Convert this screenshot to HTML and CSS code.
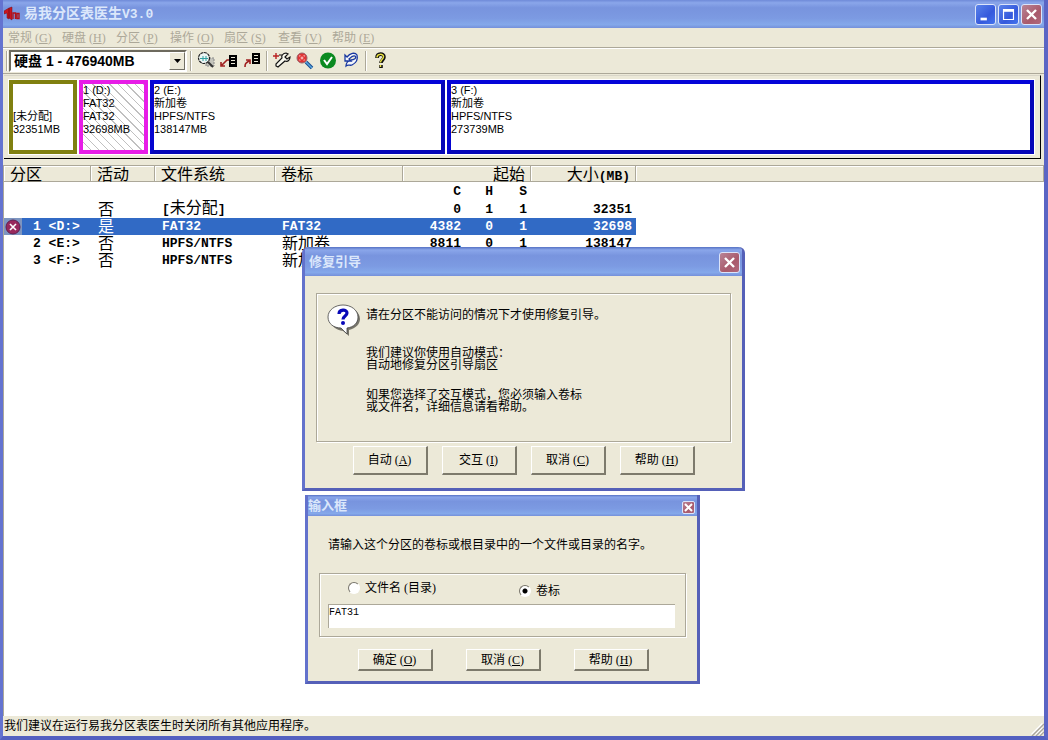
FILE: index.html
```html
<!DOCTYPE html>
<html lang="zh-CN">
<head>
<meta charset="utf-8">
<title>易我分区表医生V3.0</title>
<link rel="stylesheet" href="styles.css">
</head>
<body>
<div class="window">
  <header class="titlebar">
    <svg class="app-icon" width="16" height="16" viewBox="0 0 16 16"><path d="M0 5 5 2v11L3 12V7L0 8zM5 2l3-1v13l-3-2z" fill="#c81420" stroke="#780c14" stroke-width=".5"/><path d="M9 13V7h2.500v6M13 7.500h2v5h-2z" fill="none" stroke="#b01018" stroke-width="1.400"/></svg>
    <h1 class="title">易我分区表医生<span class="title-latin">V3.0</span></h1>
    <button class="caption-btn" aria-label="最小化"><svg width="21" height="21" viewBox="0 0 21 21"><path d="M5 14h7v3H5z" fill="#fff"/></svg></button>
    <button class="caption-btn" aria-label="最大化"><svg width="21" height="21" viewBox="0 0 21 21"><path d="M5 5h11v11H5z" fill="none" stroke="#fff" stroke-width="1.300"/><path d="M4.500 4.500h12v3h-12z" fill="#fff"/></svg></button>
    <button class="caption-btn close" aria-label="关闭"><svg width="21" height="21" viewBox="0 0 21 21"><path d="m5.500 5.500 10 10m0-10-10 10" stroke="#fff" stroke-width="2.600"/></svg></button>
  </header>

  <nav class="menubar">
    <button class="menu">常规 (<u>G</u>)</button>
    <button class="menu">硬盘 (<u>H</u>)</button>
    <button class="menu">分区 (<u>P</u>)</button>
    <button class="menu">操作 (<u>O</u>)</button>
    <button class="menu">扇区 (<u>S</u>)</button>
    <button class="menu">查看 (<u>V</u>)</button>
    <button class="menu">帮助 (<u>E</u>)</button>
  </nav>

  <div class="toolbar">
    <span class="grip"></span>
    <div class="combo">
      <select class="combo-select" aria-label="硬盘"><option>硬盘 1 - 476940MB</option></select>
      <span class="combo-arrow"><svg width="7" height="4" viewBox="0 0 7 4"><path d="M0 0h7L3.500 4z"/></svg></span>
    </div>
    <span class="sep"></span>
    <button class="tool" aria-label="浏览"><svg width="20" height="20" viewBox="0 0 20 20"><path d="M10 7h8v8h-8z" fill="#c4c4bc" stroke="#888" stroke-dasharray="2 1"/><circle cx="8" cy="7" r="5.500" fill="#eef6f4" stroke="#222" stroke-width="1.200" stroke-dasharray="3 .6"/><path d="M4 7.500h8M7 5v5M10 5v5" stroke="#30a0a0"/><path d="m12 11 5 5" stroke="#333" stroke-width="2"/></svg></button>
    <button class="tool" aria-label="备份分区表"><svg width="20" height="20" viewBox="0 0 20 20"><path d="M10 4h8v12h-8z"/><path d="M12 6.500h4M12 9.500h4M12 12.500h4" stroke="#ece9d8"/><path d="M10 9H8l-5 5M2 11v4h4" fill="none" stroke="#a02020" stroke-width="1.600"/></svg></button>
    <button class="tool" aria-label="恢复分区表"><svg width="20" height="20" viewBox="0 0 20 20"><path d="M10 2h8v11h-8z"/><path d="M12 4.500h4M12 7.500h4M12 10.500h4" stroke="#ece9d8"/><path d="M3 16c0-4 1-4 4-6M4 9h4v4" fill="none" stroke="#a02020" stroke-width="1.600"/></svg></button>
    <span class="sep"></span>
    <button class="tool" aria-label="重建分区表"><svg width="20" height="20" viewBox="0 0 20 20"><path d="M4 2v6M1 5h6" stroke="#b82020" stroke-width="1.400"/><path d="M14 2c-3 0-5 3-4 5l-6 6 0 2 2 1 7-6c3 1 5-1 5-4l-3 2-2-2 3-3zM7 4h3" fill="#f8f8ee" stroke="#111" stroke-width="1.200"/></svg></button>
    <button class="tool" aria-label="浏览扇区"><svg width="20" height="20" viewBox="0 0 20 20"><circle cx="7" cy="7" r="5" fill="#e03434" stroke="#986068"/><path d="m4.500 4.500 5 5m0-5-5 5" stroke="#ffd8d8" stroke-width="1.200" stroke-dasharray="1 1"/><path d="m11 11 6 6" stroke="#164a90" stroke-width="3.500"/><path d="m11 11 6 6" stroke="#58a8e0" stroke-width="1.500"/></svg></button>
    <button class="tool" aria-label="应用"><svg width="20" height="20" viewBox="0 0 20 20"><circle cx="10" cy="9.500" r="8" fill="#0b8a20"/><path d="m6 9 3 4 5-7" fill="none" stroke="#fff" stroke-width="2"/></svg></button>
    <button class="tool" aria-label="撤销"><svg width="20" height="20" viewBox="0 0 20 20"><path d="M4 4v6h6L8 8c2-2 4-4 6-3 2 2-1 4-4 4-3 1-5 3-5 6 2-2 4 0 6-1 4-2 6-6 5-10-2-3-7-2-10 2z" fill="#f4f6fa" stroke="#1838a0" stroke-width="1.300"/></svg></button>
    <span class="sep"></span>
    <button class="tool" aria-label="帮助"><svg width="20" height="20" viewBox="0 0 20 20"><path d="M6 7c0-5 7-5 7-1 0 3-3 3-3 6M10 14v3" fill="none" stroke="#111" stroke-width="3.600"/><path d="M6 6.500c0-4 6.500-4 6.500-1 0 3-3 3-3 6M9.500 14v2" fill="none" stroke="#e8e040" stroke-width="1.500"/></svg></button>
  </div>

  <section class="diskmap">
    <div class="part free">[未分配]<br>32351MB</div>
    <div class="part fat">1 (D:)<br>FAT32<br>FAT32<br>32698MB</div>
    <div class="part ntfs">2 (E:)<br>新加卷<br>HPFS/NTFS<br>138147MB</div>
    <div class="part ntfs">3 (F:)<br>新加卷<br>HPFS/NTFS<br>273739MB</div>
  </section>

  <main class="list">
    <table class="grid">
      <colgroup><col class="c-icon"><col class="c-part"><col class="c-act"><col class="c-fs"><col class="c-label"><col class="c-c"><col class="c-h"><col class="c-s"><col class="c-size"><col></colgroup>
      <thead>
        <tr><th colspan="2">分区</th><th>活动</th><th>文件系统</th><th>卷标</th><th colspan="3" class="num">起始</th><th class="num">大小<span class="latin">(MB)</span></th><th></th></tr>
      </thead>
      <tbody>
        <tr><td></td><td></td><td></td><td></td><td></td><td class="num">C</td><td class="num">H</td><td class="num">S</td><td></td><td></td></tr>
        <tr><td></td><td></td><td class="zh">否</td><td>[<span class="zh">未分配</span>]</td><td></td><td class="num">0</td><td class="num">1</td><td class="num">1</td><td class="num">32351</td><td></td></tr>
        <tr class="selected"><td class="mark"><svg width="16" height="16" viewBox="0 0 16 16"><circle cx="8" cy="8" r="7" fill="#98285c" stroke="#602050"/><path d="m5 5 6 6m0-6-6 6" stroke="#fff" stroke-width="1.600"/></svg></td><td>1 &lt;D:&gt;</td><td class="zh">是</td><td>FAT32</td><td>FAT32</td><td class="num">4382</td><td class="num">0</td><td class="num">1</td><td class="num">32698</td><td class="rest"></td></tr>
        <tr><td></td><td>2 &lt;E:&gt;</td><td class="zh">否</td><td>HPFS/NTFS</td><td class="zh">新加卷</td><td class="num">8811</td><td class="num">0</td><td class="num">1</td><td class="num">138147</td><td></td></tr>
        <tr><td></td><td>3 &lt;F:&gt;</td><td class="zh">否</td><td>HPFS/NTFS</td><td class="zh">新加卷</td><td></td><td></td><td></td><td></td><td></td></tr>
      </tbody>
    </table>
  </main>

  <footer class="status"><span>我们建议在运行易我分区表医生时关闭所有其他应用程序。</span>
    <svg width="13" height="13" viewBox="0 0 13 13"><path d="M1 12 12 1M5 12l7-7M9 12l3-3" stroke="#fff" stroke-width="3"/><path d="M1 13 13 1M5 13l8-8M9 13l4-4" stroke="#aaa69a" stroke-width="1.500"/></svg>
  </footer>
</div>

<section class="dialog repair" role="dialog" aria-labelledby="repair-title">
  <header class="dialog-title"><h2 id="repair-title">修复引导</h2>
    <button class="caption-btn close" aria-label="关闭"><svg width="21" height="21" viewBox="0 0 21 21"><path d="m5.500 5.500 10 10m0-10-10 10" stroke="#fff" stroke-width="2.600"/></svg></button>
  </header>
  <div class="dialog-body">
    <div class="box message">
      <svg class="bubble" width="34" height="34" viewBox="0 0 34 34"><path d="M18 3c8 0 15 5 15 12 0 5-4 9-11 11v6l-6-5C9 26 4 22 4 16 4 8 10 3 18 3z" fill="#77756a"/><path d="M16 1c8 0 15 5 15 12 0 6-4 10-11 11v6l-6-6C7 24 1 20 1 13 1 6 8 1 16 1z" fill="#fff" stroke="#444" stroke-width=".8"/><path d="M12 10c0-5 8-5 8-1 0 3-4 3-4 6.500" fill="none" stroke="#0808b8" stroke-width="3.200"/><circle cx="16" cy="19" r="2" fill="#0808b8"/></svg>
      <div class="copy">
        <p class="lead">请在分区不能访问的情况下才使用修复引导。</p>
        <p>我们建议你使用自动模式：<br>自动地修复分区引导扇区</p>
        <p>如果您选择了交互模式，您必须输入卷标<br>或文件名，详细信息请看帮助。</p>
      </div>
    </div>
    <div class="actions">
      <button class="btn">自动 (<u>A</u>)</button>
      <button class="btn">交互 (<u>I</u>)</button>
      <button class="btn">取消 (<u>C</u>)</button>
      <button class="btn">帮助 (<u>H</u>)</button>
    </div>
  </div>
</section>

<section class="dialog prompt" role="dialog" aria-labelledby="prompt-title">
  <header class="dialog-title"><h2 id="prompt-title">输入框</h2>
    <button class="caption-btn close" aria-label="关闭"><svg width="11" height="11" viewBox="0 0 11 11"><path d="m2 2 7 7m0-7-7 7" stroke="#fff" stroke-width="2"/></svg></button>
  </header>
  <div class="dialog-body">
    <label class="question" for="answer">请输入这个分区的卷标或根目录中的一个文件或目录的名字。</label>
    <div class="box">
      <div class="choices">
        <label class="choice"><input class="radio" type="radio" name="kind">文件名 (目录)</label>
        <label class="choice"><input class="radio" type="radio" name="kind" checked>卷标</label>
      </div>
      <input class="field" id="answer" type="text" value="FAT31">
    </div>
    <div class="actions">
      <button class="btn">确定 (<u>O</u>)</button>
      <button class="btn">取消 (<u>C</u>)</button>
      <button class="btn">帮助 (<u>H</u>)</button>
    </div>
  </div>
</section>
</body>
</html>
```
FILE: styles.css
```css
* { box-sizing: border-box; }

body {
  margin: 0;
  font: 12px/14px "Liberation Serif", "Noto Sans CJK SC", serif;
  color: #000;
}

button, input, select { font: inherit; color: inherit; margin: 0; }
h1, h2, p { margin: 0; }

.window {
  display: flex;
  flex-direction: column;
  min-height: 100vh;
  border: solid #6473d0;
  border-width: 0 4px 4px 3px;
  border-right-color: #5b65c4;
  border-bottom-color: #5360c0;
  background: #ece9d8;
}

.titlebar {
  display: flex;
  align-items: center;
  gap: 2px;
  height: 28px;
  padding: 0 2px 0 1px;
  background: linear-gradient(#6f8ad8, #8aa6ea 10%, #7894de 28%, #7c9ae2 65%, #84a8ea 88%, #7590da);
}
.app-icon { margin-right: 2px; }
.title, .dialog-title h2 {
  flex: 1;
  color: #dbe7fb;
  font: bold 14px/18px "Liberation Mono", "Noto Sans CJK SC", sans-serif;
}
.title-latin { font-size: 13px; }

.caption-btn {
  display: flex;
  padding: 0;
  border: 1px solid #dbe4fa;
  border-radius: 3px;
  background: linear-gradient(135deg, #5a83ea, #3559dc 60%, #4474ee);
}
.caption-btn.close { background: linear-gradient(135deg, #b98496, #a95a6c 60%, #b0687c); }
.titlebar .caption-btn svg, .repair .caption-btn svg { width: 19px; height: 19px; }

.menubar {
  display: grid;
  grid-template-columns: repeat(7, 54px);
  height: 20px;
  padding: 0 5px;
  border-bottom: 1px solid #aca899;
}
.menu {
  padding: 0;
  border: 0;
  background: none;
  color: #aca899;
  text-align: left;
  white-space: nowrap;
}

.toolbar {
  display: flex;
  align-items: center;
  height: 26px;
  padding-left: 3px;
  border-top: 1px solid #fff;
  border-bottom: 1px solid #aca899;
}
.grip, .sep {
  width: 2px;
  height: 20px;
  border-left: 1px solid #aca899;
  border-right: 1px solid #fff;
}
.grip { margin-right: 1px; }
.sep { margin: 0 3px; }
.combo { position: relative; width: 178px; }
.combo-select {
  display: block;
  width: 100%;
  height: 22px;
  padding: 0 20px 0 3px;
  appearance: none;
  border: 2px solid #fff;
  border-top-color: #6d6a5e;
  border-left-color: #6d6a5e;
  border-radius: 0;
  background: #fff;
  font: bold 14px/16px "Liberation Sans", "Noto Sans CJK SC", sans-serif;
}
.combo-arrow {
  position: absolute;
  top: 2px;
  right: 2px;
  display: grid;
  place-items: center;
  width: 16px;
  height: 18px;
  border: 1px solid #fff;
  border-right-color: #716f64;
  border-bottom-color: #716f64;
  background: #ece9d8;
  pointer-events: none;
}
.tool { display: flex; padding: 1px; border: 0; background: none; }
.tool + .tool { margin-left: 1px; }

.diskmap {
  display: grid;
  grid-template-columns: minmax(0, 68fr) minmax(0, 69fr) minmax(0, 295fr) minmax(0, 587fr);
  gap: 2px;
  margin: 1px 3px 0 1px;
  padding: 4px 6px 4px 5px;
  border: solid #000;
  border-width: 1px 1px 1px 0;
  border-top-color: #d8d5c8;
  font: 11px/13px "Liberation Sans", "Noto Sans CJK SC", sans-serif;
}
.part {
  min-height: 74px;
  border: 4px solid;
  background: #fff;
  box-shadow: 0 0 0 1px #fff;
  white-space: nowrap;
}
.part.free { padding-top: 26px; border-color: #808010; }
.part.fat {
  border-color: #e71de7;
  background: repeating-linear-gradient(45deg, #fff 0 5px, #c0c0c0 5px 6px);
}
.part.ntfs { border-color: #0505d8 #0505b8 #0505b8 #0505d0; }

.list {
  flex: 1;
  margin-top: 6px;
  border-left: 1px solid #aca899;
  background: #fff;
}
.grid {
  width: 100%;
  table-layout: fixed;
  border-collapse: separate;
  border-spacing: 0;
  font: bold 13px/15px "Liberation Mono", "Noto Sans CJK SC", monospace;
}
.grid .c-icon { width: 18px; }
.grid .c-part { width: 69px; }
.grid .c-act { width: 64px; }
.grid .c-fs { width: 120px; }
.grid .c-label { width: 128px; }
.grid .c-c { width: 62px; }
.grid .c-h { width: 32px; }
.grid .c-s { width: 34px; }
.grid .c-size { width: 105px; }
.grid th {
  padding: 0 5px 0 6px;
  border: solid #aca899;
  border-width: 1px 1px 1px 0;
  box-shadow: inset 1px 1px #fff;
  background: #ece9d8;
  font: 16px/15px "Noto Sans CJK SC", sans-serif;
  text-align: left;
}
.grid th .latin { font: bold 13px/1px "Liberation Mono", monospace; }
.grid td { height: 17px; padding: 0 4px 0 7px; white-space: nowrap; }
.grid td:nth-child(2) { padding-left: 11px; }
.grid .num { text-align: right; padding-left: 0; }
.grid .zh { font: 16px/13px "Noto Sans CJK SC", sans-serif; }
.grid td.zh { padding-bottom: 3px; }
.grid td .zh { line-height: 1px; }
.grid tbody tr:first-child td { height: 19px; }
.grid .selected td { background: #316ac5; color: #fff; }
.grid .selected td.mark { padding: 0 0 0 1px; background: #7d95c0; }
.grid .selected td.rest { background: none; }
.mark svg { display: block; }

.status {
  display: flex;
  justify-content: space-between;
  align-items: end;
  height: 20px;
  padding-left: 1px;
}
.status span { align-self: center; }

.dialog {
  position: absolute;
  border: solid #6372cc;
  border-width: 0 3px 3px;
  border-right-color: #5560b8;
  border-bottom-color: #5560b8;
  background: #ece9d8;
}
.dialog-title {
  display: flex;
  align-items: center;
  background: linear-gradient(#5672c4, #8aa6ea 10%, #7894de 30%, #7c9ae2 65%, #84a8ea 88%, #7590da);
}
.dialog-title h2 { font-size: 13px; }

.repair { left: 302px; top: 247px; width: 443px; border-radius: 6px 6px 0 0; }
.repair .dialog-title { height: 29px; padding: 2px 2px 0 4px; border-radius: 4px 4px 0 0; }
.repair .dialog-body { padding: 17px 11px 13px; }

.box {
  border: 1px solid #aca899;
  box-shadow: 1px 1px #fff, inset 1px 1px #fff;
}
.message { display: flex; gap: 5px; min-height: 148px; padding: 10px; }
.bubble { flex: none; }
.copy { padding-top: 5px; line-height: 12px; }
.copy p { margin-bottom: 18px; }
.copy .lead { margin-bottom: 26px; }

.actions { display: flex; justify-content: center; gap: 14px; }
.repair .actions { margin-top: 4px; }
.btn {
  width: 75px;
  height: 29px;
  padding: 0;
  border: solid;
  border-width: 1px 2px 2px 1px;
  border-color: #fff #7d7a6c #7d7a6c #fff;
  background: #ece9d8;
}

.prompt { left: 305px; top: 495px; width: 395px; }
.prompt .dialog-title { height: 21px; padding: 3px 1px 0 0; }
.prompt .dialog-body { padding: 22px 11px 10px; }
.prompt .caption-btn { border-radius: 2px; margin-right: 1px; }
.question { display: block; padding-left: 9px; }
.prompt .box { margin-top: 21px; padding: 7px 10px 8px 8px; }
.choices { display: grid; grid-template-columns: 171px 1fr; align-items: start; padding-left: 20px; }
.choice { display: flex; align-items: center; gap: 5px; }
.choice + .choice { padding-top: 3px; }
.radio {
  appearance: none;
  width: 12px;
  height: 12px;
  border: 1px solid;
  border-color: #77746a #fff #fff #77746a;
  border-radius: 50%;
  background: #fff;
}
.radio:checked { background: radial-gradient(circle, #000 2px, #fff 3px); }
.field {
  display: block;
  width: 100%;
  height: 24px;
  margin-top: 6px;
  padding: 0 0 8px;
  border: solid #aca899;
  border-width: 1px 0 0 1px;
  border-radius: 0;
  background: #fff;
  font: 10px/12px "Liberation Mono", monospace;
}
.prompt .actions { gap: 33px; margin: 12px 0 0 1px; }
.prompt .btn { height: 22px; }
```
